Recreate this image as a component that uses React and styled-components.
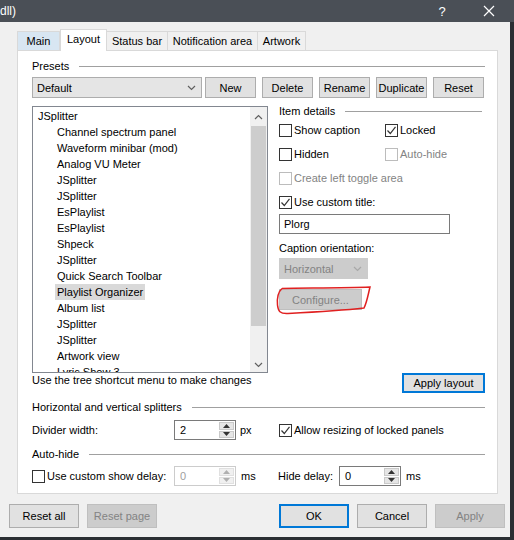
import React from 'react'
import styled, { createGlobalStyle, css } from 'styled-components'

const GlobalStyle = createGlobalStyle`
  html, body { margin: 0; padding: 0; background: #2b2e33; }
  body { font-family: "Liberation Sans", Arial, sans-serif; font-size: 11px; color: #000; }
  * { box-sizing: border-box; }
`

const Page = styled.div`
  width: 514px;
  height: 540px;
  overflow: hidden;
  background: #2b2e33;
`

const TitleBar = styled.div`
  height: 22px;
  background: #4a4f56;
  color: #fff;
  display: flex;
  align-items: center;
  font-size: 12px;
`
const TitleText = styled.div`
  flex: 1;
`
const TitleIcon = styled.div`
  width: ${p => p.$w}px;
  margin-right: ${p => p.$mr || 0}px;
  display: flex;
  justify-content: center;
  align-items: center;
  font-size: 13px;
`

const Window = styled.div`
  width: 510px;
  height: 515px;
  background: #f0f0f0;
  padding: 7px 12px 0 17px;
  display: flex;
  flex-direction: column;
`

const TabStrip = styled.div`
  display: flex;
  align-items: flex-end;
  height: 21px;
  position: relative;
  z-index: 1;
`
const Tab = styled.div`
  width: ${p => p.$w}px;
  height: 19px;
  border: 1px solid #d9d9d9;
  border-bottom: none;
  border-left-width: 0;
  background: ${p => (p.$hover ? '#d8e6f2' : '#f0f0f0')};
  display: flex;
  align-items: center;
  justify-content: center;
  white-space: nowrap;
  flex-shrink: 0;
  &:first-child { border-left-width: 1px; }
  ${p => p.$active && css`
    height: 22px;
    margin-bottom: -1px;
    background: #fff;
    border-left-width: 1px;
    padding-bottom: 3px;
  `}
`

const Panel = styled.div`
  width: 481px;
  height: 444px;
  background: #fff;
  border: 1px solid #d9d9d9;
  padding: 8px 12px 0 14px;
  display: flex;
  flex-direction: column;
`

const GroupHeader = styled.div`
  display: flex;
  align-items: center;
  height: 14px;
  margin-top: ${p => p.$mt || 0}px;
  gap: 10px;
  white-space: nowrap;
  &::after {
    content: '';
    flex: 1;
    height: 1px;
    background: #a0a0a0;
    margin-right: ${p => p.$mr || 0}px;
  }
`

const Row = styled.div`
  display: flex;
  align-items: center;
  margin-top: ${p => p.$mt || 0}px;
  height: ${p => p.$h || 20}px;
`

const Button = styled.div`
  width: ${p => p.$w}px;
  height: ${p => p.$h || 21}px;
  margin-left: ${p => p.$ml || 0}px;
  background: #e1e1e1;
  border: 1px solid #adadad;
  display: flex;
  align-items: center;
  justify-content: center;
  flex-shrink: 0;
  white-space: nowrap;
  ${p => p.$default && css`
    border: 2px solid #0078d7;
  `}
  ${p => p.$disabled && css`
    background: #cccccc;
    border-color: #bfbfbf;
    color: #838383;
  `}
`

const Select = styled.div`
  width: ${p => p.$w}px;
  height: 21px;
  background: ${p => (p.$disabled ? '#cccccc' : '#e5e5e5')};
  border: 1px solid ${p => (p.$disabled ? '#cccccc' : '#adadad')};
  color: ${p => (p.$disabled ? '#838383' : '#000')};
  display: flex;
  align-items: center;
  padding: 0 5px 0 4px;
  justify-content: space-between;
  flex-shrink: 0;
`

const MainArea = styled.div`
  display: flex;
  margin-top: 8px;
  height: 287px;
  gap: 10px;
`
const LeftCol = styled.div`
  width: 236px;
  display: flex;
  flex-direction: column;
`
const RightCol = styled.div`
  flex: 1;
  display: flex;
  flex-direction: column;
  margin-top: -2px;
  padding-left: 1px;
`

const Tree = styled.div`
  height: 267px;
  border: 1px solid #828790;
  display: flex;
  overflow: hidden;
`
const TreeItems = styled.div`
  flex: 1;
  padding: 1px 0 0 3px;
  overflow: hidden;
`
const TreeItem = styled.div`
  height: 16px;
  line-height: 16px;
  display: flex;
  padding-left: ${p => (p.$child ? 19 : 0)}px;
  white-space: nowrap;
`
const TreeLabel = styled.span`
  padding: 0 2px;
  background: ${p => (p.$selected ? '#d9d9d9' : 'transparent')};
`

const ScrollBar = styled.div`
  width: 17px;
  background: #f0f0f0;
  display: flex;
  flex-direction: column;
`
const ScrollArrow = styled.div`
  height: ${p => p.$h}px;
  display: flex;
  align-items: center;
  justify-content: center;
`
const ScrollThumb = styled.div`
  height: 200px;
  margin: 0 1px;
  background: #cdcdcd;
`
const ScrollTrack = styled.div`
  flex: 1;
`

const Hint = styled.div`
  height: 14px;
  line-height: 14px;
  white-space: nowrap;
`

const CheckGrid = styled.div`
  display: grid;
  grid-template-columns: 106px 1fr;
  grid-auto-rows: 24px;
`
const CheckRow = styled.label`
  display: flex;
  align-items: center;
  gap: 2px;
  white-space: nowrap;
  width: ${p => (p.$w ? p.$w + 'px' : 'auto')};
  flex-shrink: 0;
  grid-column: ${p => (p.$span ? '1 / span 2' : 'auto')};
  color: ${p => (p.$disabled ? '#838383' : '#000')};
`
const Box = styled.span`
  width: 13px;
  height: 13px;
  border: 1px solid ${p => (p.$disabled ? '#bcbcbc' : '#333')};
  background: #fff;
  display: inline-flex;
  align-items: center;
  justify-content: center;
  flex-shrink: 0;
`

const TextInput = styled.div`
  width: 171px;
  height: 20px;
  border: 1px solid #7a7a7a;
  padding: 0 4px;
  display: flex;
  align-items: center;
`

const Label = styled.div`
  height: 14px;
  line-height: 14px;
  margin-top: ${p => p.$mt || 0}px;
  padding-left: ${p => p.$pl || 0}px;
  color: ${p => (p.$disabled ? '#838383' : '#000')};
  white-space: nowrap;
  width: ${p => (p.$w ? p.$w + 'px' : 'auto')};
  flex-shrink: 0;
`

const ConfigureWrap = styled.div`
  position: relative;
  margin-top: 10px;
  width: 83px;
`
const Annotation = styled.svg`
  position: absolute;
  left: -3px;
  top: -2px;
  overflow: visible;
  pointer-events: none;
`

const Spacer = styled.div`
  flex: 1;
`

const SpinWrap = styled.div`
  width: 62px;
  height: 20px;
  border: 1px solid ${p => (p.$disabled ? '#cccccc' : '#7a7a7a')};
  display: flex;
  flex-shrink: 0;
  color: ${p => (p.$disabled ? '#a0a0a0' : '#000')};
`
const SpinValue = styled.div`
  flex: 1;
  padding-left: 5px;
  display: flex;
  align-items: center;
`
const SpinButtons = styled.div`
  width: 16px;
  display: flex;
  flex-direction: column;
  padding: 1px 1px 1px 0;
  gap: 1px;
`
const SpinBtn = styled.div`
  flex: 1;
  background: ${p => (p.$disabled ? '#f0f0f0' : '#e5e5e5')};
  border: 1px solid ${p => (p.$disabled ? '#e0e0e0' : '#c9c9c9')};
  display: flex;
  align-items: center;
  justify-content: center;
`

const Footer = styled.div`
  display: flex;
  align-items: center;
  margin-top: 10px;
  margin-left: -8px;
  margin-right: -7px;
  height: 24px;
`

const Chevron = ({ up, color = '#606060' }) => (
  <svg width={9} height={6} viewBox="0 0 9 6">
    <path d={up ? 'M1 5 L4.5 1.5 L8 5' : 'M1 1 L4.5 4.5 L8 1'} fill="none" stroke={color} strokeWidth="1.2" />
  </svg>
)

const Check = ({ checked, disabled }) => (
  <Box $disabled={disabled}>
    {checked && (
      <svg width="11" height="11" viewBox="0 0 11 11">
        <path d="M1.5 5.5 L4.3 8.5 L9.5 1.8" fill="none" stroke="#333" strokeWidth="1.2" />
      </svg>
    )}
  </Box>
)

const Spin = ({ value, disabled }) => (
  <SpinWrap $disabled={disabled}>
    <SpinValue>{value}</SpinValue>
    <SpinButtons>
      <SpinBtn $disabled={disabled}>
        <svg width="7" height="4" viewBox="0 0 7 4"><path d="M0 4 L3.5 0 L7 4 Z" fill={disabled ? '#b0b0b0' : '#333'} /></svg>
      </SpinBtn>
      <SpinBtn $disabled={disabled}>
        <svg width="7" height="4" viewBox="0 0 7 4"><path d="M0 0 L3.5 4 L7 0 Z" fill={disabled ? '#b0b0b0' : '#333'} /></svg>
      </SpinBtn>
    </SpinButtons>
  </SpinWrap>
)

const treeItems = [
  { name: 'JSplitter' },
  { name: 'Channel spectrum panel', child: true },
  { name: 'Waveform minibar (mod)', child: true },
  { name: 'Analog VU Meter', child: true },
  { name: 'JSplitter', child: true },
  { name: 'JSplitter', child: true },
  { name: 'EsPlaylist', child: true },
  { name: 'EsPlaylist', child: true },
  { name: 'Shpeck', child: true },
  { name: 'JSplitter', child: true },
  { name: 'Quick Search Toolbar', child: true },
  { name: 'Playlist Organizer', child: true, selected: true },
  { name: 'Album list', child: true },
  { name: 'JSplitter', child: true },
  { name: 'JSplitter', child: true },
  { name: 'Artwork view', child: true },
  { name: 'Lyric Show 3', child: true },
]

const tabs = [
  { name: 'Main', w: 43, hover: true },
  { name: 'Layout', w: 47, active: true },
  { name: 'Status bar', w: 61 },
  { name: 'Notification area', w: 90 },
  { name: 'Artwork', w: 48 },
]

export default function App() {
  return (
    <Page>
      <GlobalStyle />
      <TitleBar>
        <TitleText>dll)</TitleText>
        <TitleIcon $w={22} $mr={11}>?</TitleIcon>
        <TitleIcon $w={50}>
          <svg width="12" height="12" viewBox="0 0 12 12">
            <path d="M1 1 L11 11 M11 1 L1 11" stroke="#fff" strokeWidth="1.2" />
          </svg>
        </TitleIcon>
      </TitleBar>
      <Window>
        <TabStrip>
          {tabs.map(t => (
            <Tab key={t.name} $w={t.w} $active={t.active} $hover={t.hover}>{t.name}</Tab>
          ))}
        </TabStrip>
        <Panel>
          <GroupHeader>Presets</GroupHeader>
          <Row $mt={4} $h={21}>
            <Select $w={170}>
              <span>Default</span>
              <Chevron />
            </Select>
            <Button $w={51} $ml={3}>New</Button>
            <Button $w={51} $ml={6}>Delete</Button>
            <Button $w={51} $ml={6}>Rename</Button>
            <Button $w={51} $ml={6}>Duplicate</Button>
            <Button $w={51} $ml={6}>Reset</Button>
          </Row>
          <MainArea>
            <LeftCol>
              <Tree>
                <TreeItems>
                  {treeItems.map((it, i) => (
                    <TreeItem key={i} $child={it.child}>
                      <TreeLabel $selected={it.selected}>{it.name}</TreeLabel>
                    </TreeItem>
                  ))}
                </TreeItems>
                <ScrollBar>
                  <ScrollArrow $h={19}><Chevron up /></ScrollArrow>
                  <ScrollThumb />
                  <ScrollTrack />
                  <ScrollArrow $h={14}><Chevron /></ScrollArrow>
                </ScrollBar>
              </Tree>
              <Hint>Use the tree shortcut menu to make changes</Hint>
            </LeftCol>
            <RightCol>
              <GroupHeader $mr={3}>Item details</GroupHeader>
              <CheckGrid>
                <CheckRow><Check />Show caption</CheckRow>
                <CheckRow><Check checked />Locked</CheckRow>
                <CheckRow><Check />Hidden</CheckRow>
                <CheckRow $disabled><Check disabled />Auto-hide</CheckRow>
                <CheckRow $span $disabled><Check disabled />Create left toggle area</CheckRow>
                <CheckRow $span><Check checked />Use custom title:</CheckRow>
              </CheckGrid>
              <TextInput>Plorg</TextInput>
              <Label $mt={7}>Caption orientation:</Label>
              <Row $mt={3} $h={21}>
                <Select $w={89} $disabled>
                  <span>Horizontal</span>
                  <Chevron color="#a8a8a8" />
                </Select>
              </Row>
              <ConfigureWrap>
                <Button $w={83} $disabled>Configure...</Button>
                <Annotation width="95" height="29" viewBox="0 0 95 29">
                  <path
                    d="M6 1.5 C30 1 70 1 94 0 C92 8 91 15 88 21 C70 23 40 25 12 26.5 C4 27 2 24 1.5 18 C1 12 2 5 6 1.5"
                    fill="none"
                    stroke="#e02020"
                    strokeWidth="1.5"
                  />
                </Annotation>
              </ConfigureWrap>
              <Spacer />
              <Row $h={20}>
                <Spacer />
                <Button $w={83} $h={20} $default>Apply layout</Button>
              </Row>
            </RightCol>
          </MainArea>
          <GroupHeader $mt={7}>Horizontal and vertical splitters</GroupHeader>
          <Row $mt={6} $h={20}>
            <Label $w={142}>Divider width:</Label>
            <Spin value="2" />
            <Label $w={43} $pl={4}>px</Label>
            <CheckRow><Check checked />Allow resizing of locked panels</CheckRow>
          </Row>
          <GroupHeader $mt={7}>Auto-hide</GroupHeader>
          <Row $mt={5} $h={20}>
            <CheckRow $w={142}><Check />Use custom show delay:</CheckRow>
            <Spin value="0" disabled />
            <Label $w={42} $pl={5}>ms</Label>
            <Label $w={61}>Hide delay:</Label>
            <Spin value="0" />
            <Label $pl={5}>ms</Label>
          </Row>
        </Panel>
        <Footer>
          <Button $w={70} $h={24}>Reset all</Button>
          <Button $w={70} $h={24} $ml={8} $disabled>Reset page</Button>
          <Spacer />
          <Button $w={70} $h={24} $default>OK</Button>
          <Button $w={70} $h={24} $ml={8}>Cancel</Button>
          <Button $w={70} $h={24} $ml={8} $disabled>Apply</Button>
        </Footer>
      </Window>
    </Page>
  )
}
